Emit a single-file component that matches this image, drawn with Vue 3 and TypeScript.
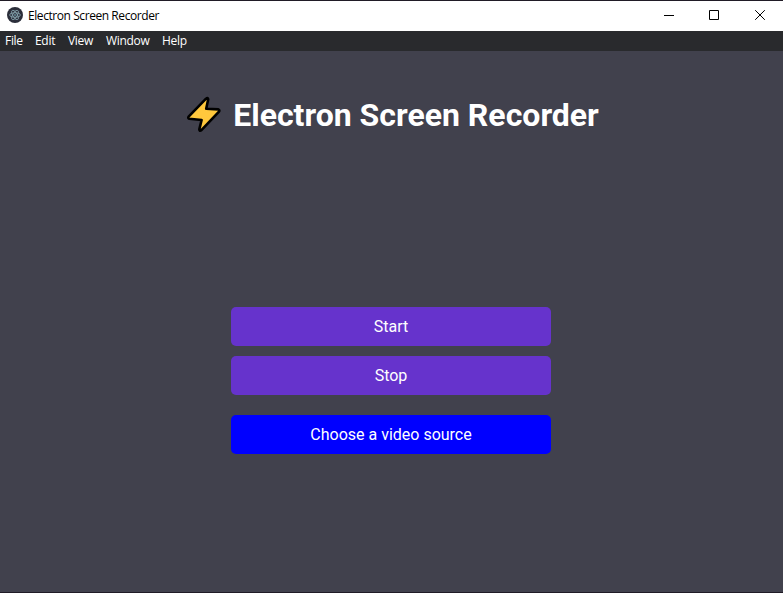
<script setup lang="ts">
interface MenuEntry {
  label: string
  name: string
}

const title: string = 'Electron Screen Recorder'
const menu: MenuEntry[] = [
  { label: 'File', name: 'file' },
  { label: 'Edit', name: 'edit' },
  { label: 'View', name: 'view' },
  { label: 'Window', name: 'windows' },
  { label: 'Help', name: 'help' },
]
</script>

<template>
  <div class="window">
    <header class="titlebar">
      <svg class="app-icon" viewBox="0 0 16 16">
        <circle cx="8" cy="8" r="8" fill="#2b2e3a" />
        <g fill="none" stroke="#8aa9b3" stroke-width="0.8">
          <ellipse cx="8" cy="8" rx="5.3" ry="2.2" />
          <ellipse cx="8" cy="8" rx="5.3" ry="2.2" transform="rotate(60 8 8)" />
          <ellipse cx="8" cy="8" rx="5.3" ry="2.2" transform="rotate(120 8 8)" />
        </g>
        <circle cx="8" cy="8" r="0.7" fill="#9feaf9" />
      </svg>
      <span class="app-title">{{ title }}</span>
      <div class="controls">
        <button class="control minimize" aria-label="Minimize">
          <svg width="11" height="11" viewBox="0 0 11 11"><path d="M0 5.5h10" /></svg>
        </button>
        <button class="control" aria-label="Maximize">
          <svg width="11" height="11" viewBox="0 0 11 11"><path d="M.5.5h9v9h-9z" /></svg>
        </button>
        <button class="control" aria-label="Close">
          <svg width="11" height="11" viewBox="0 0 11 11"><path d="M.2.2l9.6 9.6M9.8.2L.2 9.8" /></svg>
        </button>
      </div>
    </header>
    <nav class="menubar">
      <span v-for="entry in menu" :key="entry.name" :class="['menu-item', entry.name]">{{ entry.label }}</span>
    </nav>
    <main class="content">
      <h1 class="heading">
        <svg class="bolt" viewBox="0 0 36 38">
          <path d="M19.8 2.9Q21.9 1.2 22.2 3.2L20.2 12.8 32.4 13.4Q34 14 33 15.6L15.4 34.2Q13.4 35.6 13.3 33.4L15.6 24 3.2 22.8Q1.6 22.2 2.6 20.6Z" />
        </svg>
        <span>{{ title }}</span>
      </h1>
      <div class="actions">
        <button class="action">Start</button>
        <button class="action">Stop</button>
        <button class="action source">Choose a video source</button>
      </div>
    </main>
  </div>
</template>

<style>
body {
  margin: 0;
  overflow: hidden;
}
</style>

<style scoped>
.window {
  box-sizing: border-box;
  width: 100vw;
  height: 100vh;
  display: flex;
  flex-direction: column;
  border-top: 1px solid #201b26;
  border-bottom: 1px solid #201b26;
  background: #41414d;
}
.titlebar {
  height: 30px;
  flex: none;
  display: flex;
  align-items: center;
  background: #fff;
  color: #000;
  font: 12px/16px "Open Sans", "Noto Sans", sans-serif;
}
.app-icon {
  width: 16px;
  height: 16px;
  margin: 0 5px 2px 7px;
}
.app-title {
  letter-spacing: -0.43px;
  white-space: nowrap;
}
.controls {
  display: flex;
  margin-left: auto;
  height: 30px;
}
.control {
  width: 46px;
  padding: 0 0 1px 1px;
  border: 0;
  background: none;
  display: flex;
  align-items: center;
  justify-content: center;
}
.control.minimize {
  padding-left: 3px;
}
.control path {
  fill: none;
  stroke: #000;
  stroke-width: 1;
}
.menubar {
  height: 20px;
  flex: none;
  display: flex;
  gap: 12px;
  padding-left: 5px;
  background: #292a2d;
  color: #fff;
  font: 12px/20px "Open Sans", "Noto Sans", sans-serif;
}
.menu-item {
  white-space: nowrap;
  letter-spacing: -0.3px;
}
.file { width: 18px; }
.edit { width: 21px; }
.view { width: 26px; }
.windows { width: 44px; }
.help { width: 26px; }
.content {
  flex: 1;
  display: flex;
  flex-direction: column;
  align-items: center;
  font-family: Roboto, sans-serif;
  color: #fff;
}
.heading {
  display: flex;
  align-items: center;
  gap: 11px;
  height: 38px;
  margin: 45px 0 173px;
  padding-left: 2px;
  font-size: 32px;
  line-height: 38px;
  font-weight: 700;
  white-space: nowrap;
}
.bolt {
  width: 36px;
  height: 38px;
}
.bolt path {
  fill: #ffc83d;
  stroke: #000;
  stroke-width: 2.6;
  stroke-linejoin: round;
}
.actions {
  width: 320px;
  margin-right: 1px;
  display: flex;
  flex-direction: column;
  gap: 10px;
}
.action {
  height: 39px;
  padding: 0;
  border: 0;
  border-radius: 5px;
  background: #6633cc;
  color: #fff;
  font: 400 16px/39px Roboto, sans-serif;
}
.source {
  margin-top: 10px;
  background: #0000ff;
}
</style>
